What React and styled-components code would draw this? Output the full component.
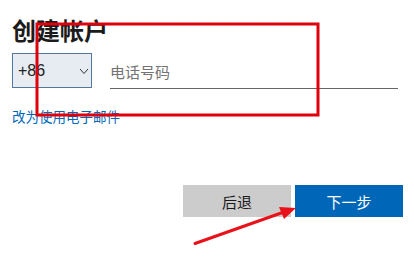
import React from "react";
import styled, { createGlobalStyle } from "styled-components";

const Global = createGlobalStyle`
  html, body { margin: 0; padding: 0; background: #fff; }
  body { font-family: "Noto Sans CJK SC", "Noto Sans", sans-serif; }
`;

const Page = styled.div`
  position: relative;
  width: 414px;
  height: 273px;
  overflow: hidden;
  box-sizing: border-box;
  padding: 14px 16px 0 12px;
`;

const Title = styled.h1`
  margin: 0;
  font-size: 24px;
  line-height: 32px;
  font-weight: 700;
  color: #1b1b1b;
`;

const Row = styled.div`
  display: flex;
  align-items: flex-start;
  gap: 18px;
  margin-top: 7px;
`;

const Select = styled.div`
  box-sizing: border-box;
  width: 80px;
  height: 35px;
  border: 1px solid #54779b;
  background: #e6ecf2;
  display: flex;
  align-items: center;
  justify-content: space-between;
  padding: 0 2px 0 5px;
  font-family: "Liberation Sans", Arial, sans-serif;
  font-size: 16px;
  color: #222;
`;

const Phone = styled.div`
  flex: 1;
  box-sizing: border-box;
  height: 36px;
  border-bottom: 1px solid #666;
  display: flex;
  align-items: center;
  padding-top: 2px;
  font-size: 15px;
  color: #737373;
`;

const Link = styled.a`
  display: block;
  margin-top: 17px;
  font-size: 13.5px;
  line-height: 20px;
  color: #0067b8;
  text-decoration: none;
`;

const Buttons = styled.div`
  display: flex;
  justify-content: flex-end;
  gap: 4px;
  margin-top: 59px;
  padding-right: -5px;
  margin-right: -5px;
`;

const Button = styled.button`
  width: ${(p) => (p.$primary ? "108px" : "108px")};
  height: 32px;
  border: none;
  padding: 0;
  font-family: "Noto Sans CJK SC", sans-serif;
  font-size: 15px;
  background: ${(p) => (p.$primary ? "#0067b8" : "#cccccc")};
  color: ${(p) => (p.$primary ? "#fff" : "#1b1b1b")};
`;

const Overlay = styled.svg`
  position: absolute;
  left: 0;
  top: 0;
  pointer-events: none;
`;

export default function App() {
  return (
    <>
      <Global />
      <Page>
        <Title>创建帐户</Title>
        <Row>
          <Select>
            <span>+86</span>
            <svg width="10" height="8" viewBox="0 0 10 8">
              <path d="M1 2 L5 6.5 L9 2" fill="none" stroke="#333" strokeWidth="1" />
            </svg>
          </Select>
          <Phone>电话号码</Phone>
        </Row>
        <Link>改为使用电子邮件</Link>
        <Buttons>
          <Button>后退</Button>
          <Button $primary>下一步</Button>
        </Buttons>
        <Overlay width="414" height="273" viewBox="0 0 414 273">
          <rect x="37" y="24" width="281" height="91" fill="none" stroke="#e0000b" strokeWidth="3" />
          <line x1="195" y1="243.5" x2="284" y2="212" stroke="#e8121a" strokeWidth="3" strokeLinecap="round" />
          <polygon points="296,208 279,207 284,219" fill="#e8121a" />
        </Overlay>
      </Page>
    </>
  );
}
